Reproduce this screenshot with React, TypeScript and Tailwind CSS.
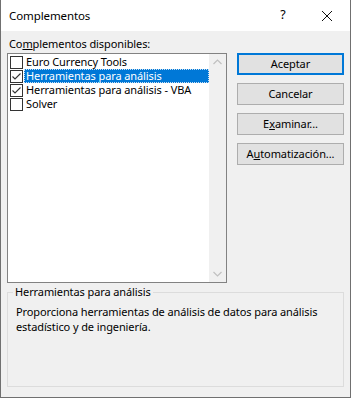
import React from "react";

const font = { fontFamily: '"Segoe UI", "Noto Sans", "Open Sans", sans-serif' };

function Check({ checked }: { checked: boolean }) {
  return (
    <div className="w-[13px] h-[13px] border border-[#333333] bg-white flex items-center justify-center shrink-0">
      {checked && (
        <svg width="11" height="11" viewBox="0 0 11 11">
          <path d="M1.5 5.5 L4 8 L9.5 2.5" fill="none" stroke="#333" strokeWidth="1.1" />
        </svg>
      )}
    </div>
  );
}

function Item({ label, checked, selected }: { label: string; checked: boolean; selected?: boolean }) {
  return (
    <div className="flex items-center h-[14px]">
      <div className="w-[14px] flex items-center">
        <Check checked={checked} />
      </div>
      <div
        className={`h-[14px] flex items-center pl-[2px] ${selected ? "bg-[#0078d7] text-white w-[185px] outline outline-1 outline-dotted outline-[#c8e0f4] -outline-offset-1" : "text-black"}`}
      >
        <span className="leading-[14px]">{label}</span>
      </div>
    </div>
  );
}

function Btn({ children, primary }: { children: React.ReactNode; primary?: boolean }) {
  return (
    <div
      className={`w-[107px] h-[22px] flex items-center justify-center bg-[#e1e1e1] text-black ${primary ? "border-2 border-[#0078d7]" : "border border-[#adadad]"}`}
    >
      {children}
    </div>
  );
}

export default function App() {
  return (
    <div className="w-[351px] h-[398px] bg-[#f0f0f0] border border-[#707070] border-t-0 flex flex-col text-[11px] tracking-[-0.1px] overflow-hidden" style={font}>
      <div className="h-[31px] bg-white flex items-center shrink-0">
        <span className="pl-[8px] text-[11.5px] text-black flex-1">Complementos</span>
        <span className="w-[20px] text-center text-[12.5px] mr-[28px]">?</span>
        <svg width="12" height="12" viewBox="0 0 12 12" className="mr-[17px]">
          <path d="M1 1 L11 11 M11 1 L1 11" stroke="#111" strokeWidth="1" />
        </svg>
      </div>
      <div className="flex-1 flex flex-col px-[6px]">
        <div className="pl-[2px] pt-[5px] h-[22px] leading-[16px]">
          Co<span className="underline">m</span>plementos disponibles:
        </div>
        <div className="flex gap-[10px]">
          <div className="w-[221px] h-[230px] border border-[#828282] bg-white flex">
            <div className="flex-1 pt-[1px] pl-[2px]">
              <Item label="Euro Currency Tools" checked={false} />
              <Item label="Herramientas para análisis" checked={true} selected />
              <Item label="Herramientas para análisis - VBA" checked={true} />
              <Item label="Solver" checked={false} />
            </div>
            <div className="w-[17px] bg-[#f0f0f0] flex flex-col justify-between items-center py-[5px]">
              <svg width="9" height="6" viewBox="0 0 9 6">
                <path d="M0.5 5 L4.5 1 L8.5 5" fill="none" stroke="#c0c0c0" strokeWidth="1.2" />
              </svg>
              <svg width="9" height="6" viewBox="0 0 9 6">
                <path d="M0.5 1 L4.5 5 L8.5 1" fill="none" stroke="#c0c0c0" strokeWidth="1.2" />
              </svg>
            </div>
          </div>
          <div className="flex flex-col gap-[8px]">
            <Btn primary>Aceptar</Btn>
            <Btn>Cancelar</Btn>
            <Btn>
              <span>
                E<span className="underline">x</span>aminar...
              </span>
            </Btn>
            <Btn>
              <span>
                A<span className="underline">u</span>tomatización...
              </span>
            </Btn>
          </div>
        </div>
        <div className="mt-[9px] relative h-[95px] border border-[#dcdcdc] w-[337px]">
          <span className="absolute left-[5px] top-[-9px] bg-[#f0f0f0] px-[2px] leading-[16px]">Herramientas para análisis</span>
          <div className="pl-[8px] pt-[11px] leading-[15px] pr-[4px]">
            Proporciona herramientas de análisis de datos para análisis estadístico y de ingeniería.
          </div>
        </div>
      </div>
    </div>
  );
}
